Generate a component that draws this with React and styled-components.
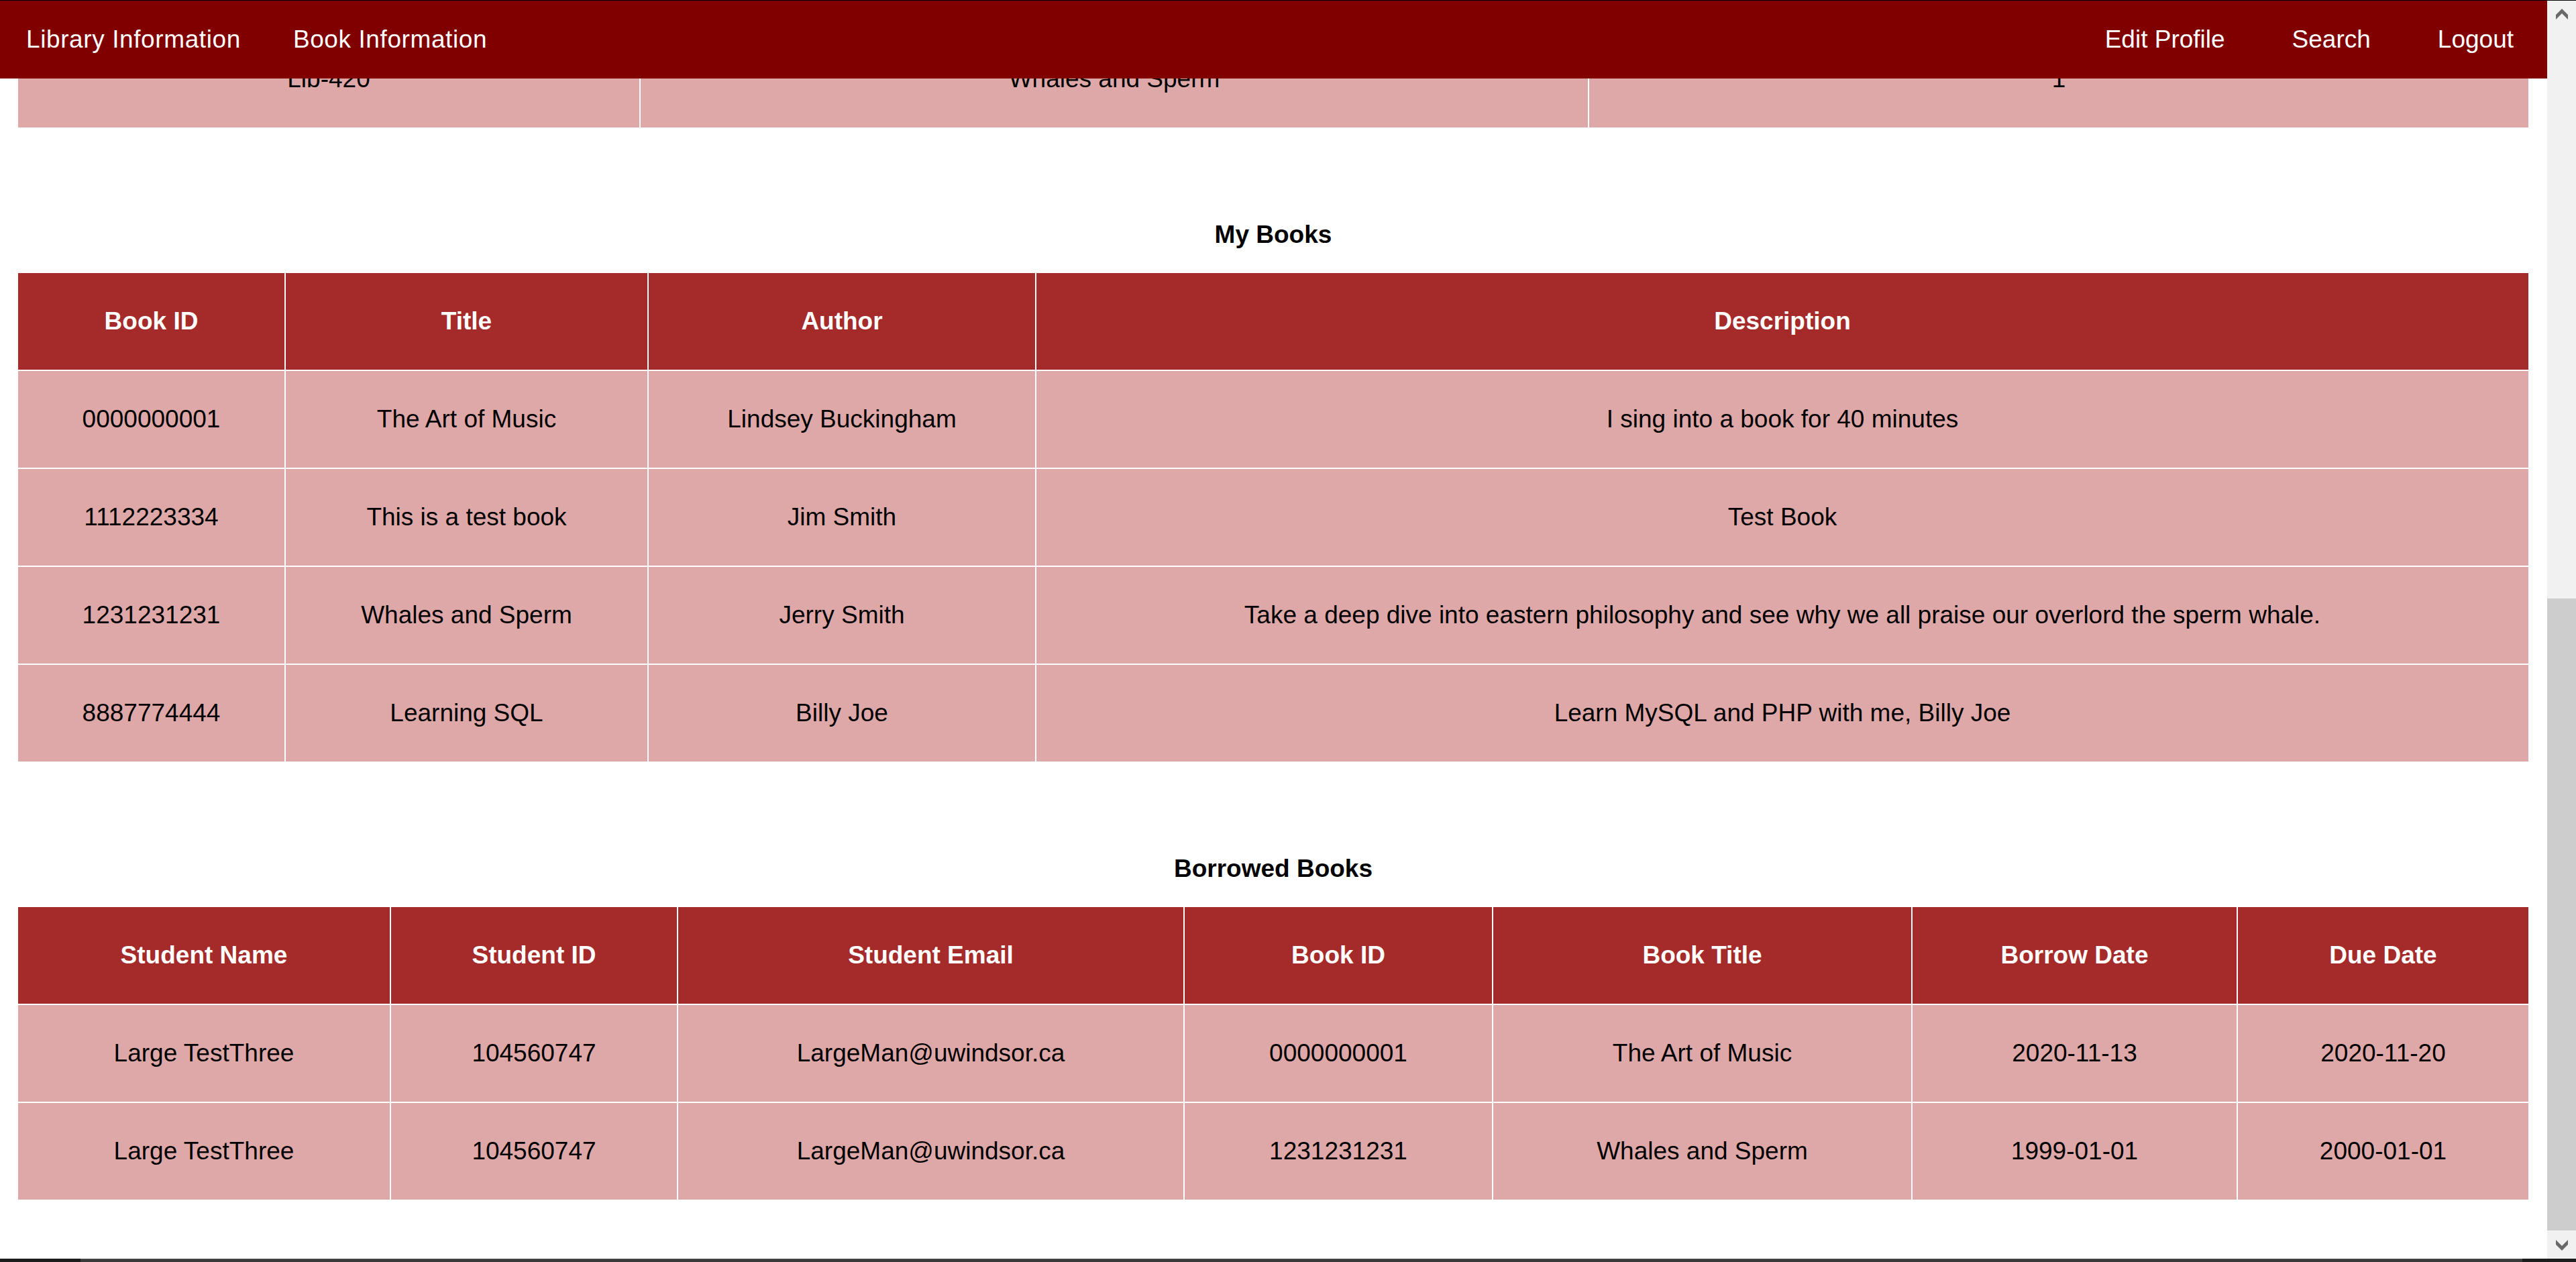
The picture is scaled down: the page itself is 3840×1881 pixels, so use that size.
import styled, { createGlobalStyle } from 'styled-components';

//Data
const libraryRow = ['Lib-420', 'Whales and Sperm', '1'];

const myBooksHead = ['Book ID', 'Title', 'Author', 'Description'];
const myBooks = [
    ['0000000001', 'The Art of Music', 'Lindsey Buckingham', 'I sing into a book for 40 minutes'],
    ['1112223334', 'This is a test book', 'Jim Smith', 'Test Book'],
    ['1231231231', 'Whales and Sperm', 'Jerry Smith', 'Take a deep dive into eastern philosophy and see why we all praise our overlord the sperm whale.'],
    ['8887774444', 'Learning SQL', 'Billy Joe', 'Learn MySQL and PHP with me, Billy Joe'],
];

const borrowedHead = ['Student Name', 'Student ID', 'Student Email', 'Book ID', 'Book Title', 'Borrow Date', 'Due Date'];
const borrowed = [
    ['Large TestThree', '104560747', 'LargeMan@uwindsor.ca', '0000000001', 'The Art of Music', '2020-11-13', '2020-11-20'],
    ['Large TestThree', '104560747', 'LargeMan@uwindsor.ca', '1231231231', 'Whales and Sperm', '1999-01-01', '2000-01-01'],
];

const DataTable = ({ widths, head, rows }) => (
    <Table>
        <colgroup>
            {widths.map((w, i) => <Col key={i} $w={w} />)}
        </colgroup>
        {head && (
            <thead>
                <tr>
                    {head.map((h) => <HeadCell key={h}>{h}</HeadCell>)}
                </tr>
            </thead>
        )}
        <tbody>
            {rows.map((row, i) => (
                <tr key={i}>
                    {row.map((cell, j) => <Cell key={j}>{cell}</Cell>)}
                </tr>
            ))}
        </tbody>
    </Table>
);

const Chevron = ({ down }) => (
    <svg width="18" height="16" viewBox="0 0 18 16">
        <polygon
            points={down ? '0,0 9,9 18,0 18,7 9,16 0,7' : '0,9 9,0 18,9 18,16 9,7 0,16'}
            fill="#696969"
        />
    </svg>
);

const App = () => {
    return (
        <Screen>
            <GlobalStyle />
            <TopEdge />
            <Middle>
                <Viewport>
                    <Content>
                        <DataTable widths={[928, 1414, 1400]} rows={[libraryRow]} />

                        <Heading>My Books</Heading>
                        <DataTable widths={[399, 541, 578, 2224]} head={myBooksHead} rows={myBooks} />

                        <Heading>Borrowed Books</Heading>
                        <DataTable widths={[556, 428, 755, 460, 625, 485, 433]} head={borrowedHead} rows={borrowed} />
                    </Content>

                    <NavBar>
                        <NavGroup>
                            <NavLink>Library Information</NavLink>
                            <NavLink>Book Information</NavLink>
                        </NavGroup>
                        <NavGroup>
                            <NavLink $right>Edit Profile</NavLink>
                            <NavLink $right>Search</NavLink>
                            <NavLink $right>Logout</NavLink>
                        </NavGroup>
                    </NavBar>
                </Viewport>

                <ScrollBar>
                    <ScrollButton><Chevron /></ScrollButton>
                    <Track>
                        <Thumb />
                    </Track>
                    <ScrollButton $bottom><Chevron down /></ScrollButton>
                </ScrollBar>
            </Middle>
            <BottomBar>
                <BottomThumb />
            </BottomBar>
        </Screen>
    );
}

const GlobalStyle = createGlobalStyle`
    html, body{
        margin: 0;
        padding: 0;
        overflow: hidden;
        background: white;
    }
    *{
        box-sizing: border-box;
    }
`;

const Screen = styled.div`
    height: 100vh;
    display: flex;
    flex-direction: column;
    font-family: "Liberation Sans", Arial, sans-serif;
`;

const TopEdge = styled.div`
    height: 1px;
    background: #000;
`;

const Middle = styled.div`
    flex: 1;
    min-height: 0;
    display: flex;
`;

const Viewport = styled.div`
    flex: 1;
    position: relative;
    overflow: hidden;
    background: white;
`;

//Nav
const NavBar = styled.nav`
    position: absolute;
    top: 0;
    left: 0;
    right: 0;
    height: 116px;
    background: #800000;
    display: flex;
    justify-content: space-between;
    align-items: center;
`;

const NavGroup = styled.div`
    display: flex;
    align-items: center;
`;

const NavLink = styled.a`
    color: white;
    font-size: 37px;
    line-height: 42px;
    padding: ${(p) => (p.$right ? '0 50px' : '0 39px')};
    letter-spacing: ${(p) => (p.$right ? '0' : '0.6px')};
    cursor: pointer;
    white-space: nowrap;
`;

//Tables
const Content = styled.div`
    padding: 45px 28px 0 27px;
`;

const Heading = styled.h4`
    margin: 139px 0 36px;
    font-size: 37px;
    line-height: 42px;
    font-weight: bold;
    text-align: center;
    color: black;
`;

const Table = styled.table`
    width: 100%;
    table-layout: fixed;
    border-collapse: separate;
    border-spacing: 0;
    tbody tr:last-child td{
        border-bottom: none;
    }
`;

const Col = styled.col`
    width: ${(p) => p.$w}px;
`;

const Cell = styled.td`
    padding: 0;
    line-height: 144px;
    font-size: 37px;
    text-align: center;
    white-space: nowrap;
    color: black;
    background: #dfa8a8;
    border-right: 2px solid white;
    border-bottom: 2px solid white;
    &:last-child{
        border-right: none;
    }
`;

const HeadCell = styled(Cell).attrs({ as: 'th' })`
    color: white;
    font-weight: bold;
    background: #a52a2a;
`;

//Scrollbar
const ScrollBar = styled.div`
    width: 43px;
    background: #f1f1f1;
    display: flex;
    flex-direction: column;
`;

const ScrollButton = styled.div`
    height: ${(p) => (p.$bottom ? '42px' : '43px')};
    display: flex;
    justify-content: center;
    align-items: flex-start;
    padding-top: ${(p) => (p.$bottom ? '14px' : '12px')};
`;

const Track = styled.div`
    flex: 1;
    display: flex;
    flex-direction: column;
    justify-content: flex-end;
`;

const Thumb = styled.div`
    height: 942px;
    background: #cdcdcd;
`;

const BottomBar = styled.div`
    height: 5px;
    background: #1d1d1d;
    padding-left: 120px;
    padding-right: 80px;
`;

const BottomThumb = styled.div`
    height: 100%;
    background: #3a3a3a;
    border-top: 1px solid #555;
`;

export default App;
